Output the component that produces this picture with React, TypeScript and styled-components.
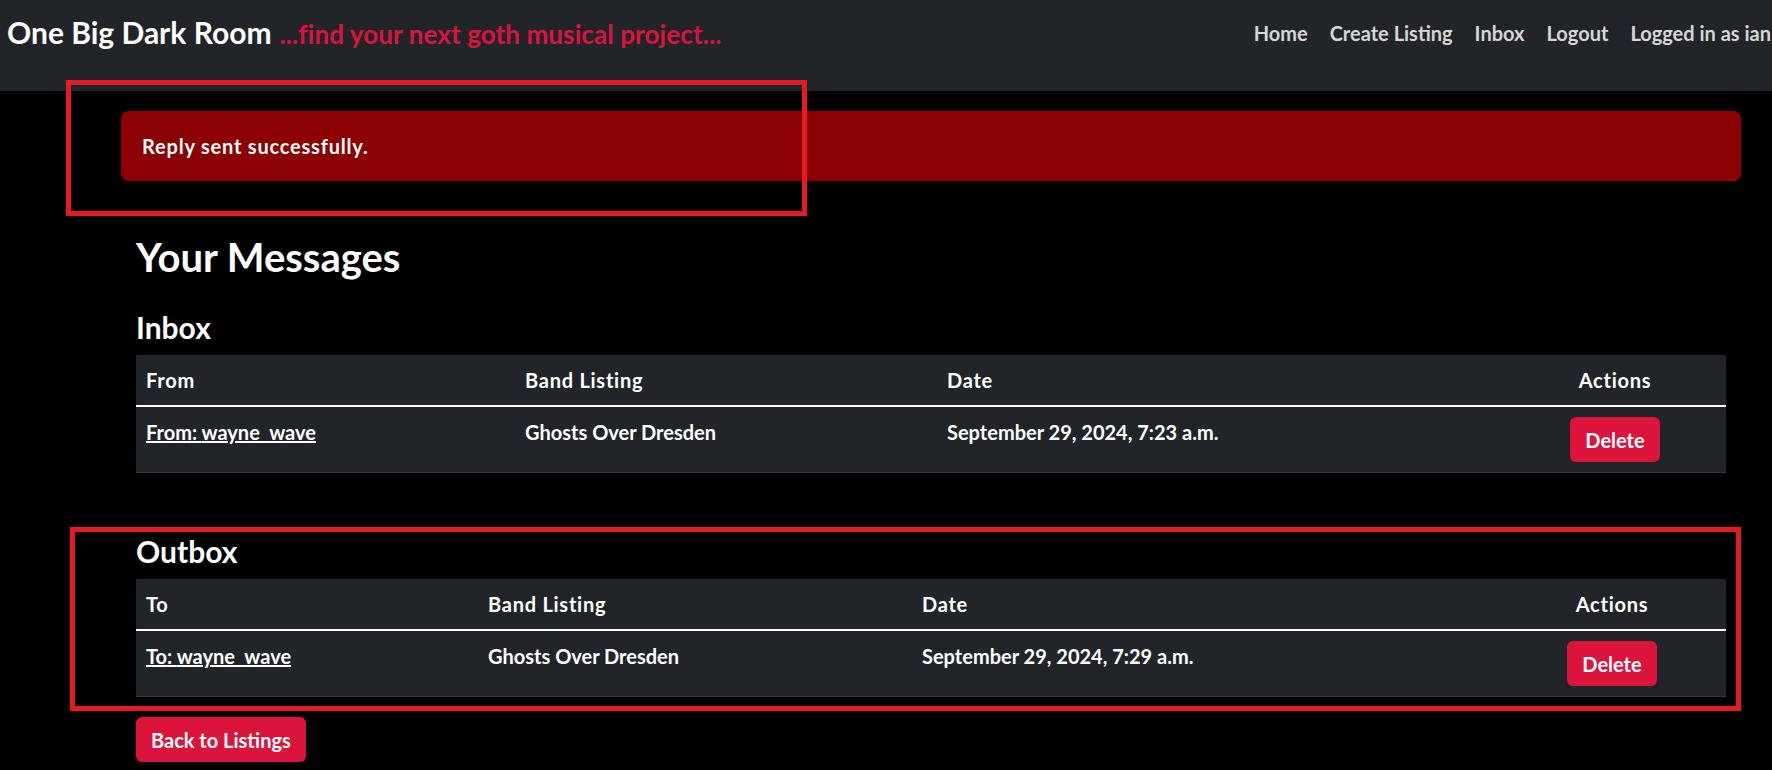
import React from "react";
import styled, { createGlobalStyle } from "styled-components";

const GlobalStyle = createGlobalStyle`
  * { box-sizing: border-box; }
  html, body {
    margin: 0;
    padding: 0;
    background: #000;
    overflow: hidden;
  }
  body {
    font-family: Lato, "Open Sans", "DejaVu Sans", sans-serif;
    color: #fff;
    font-size: 20px;
    line-height: 1.5;
  }
`;

const Page = styled.div`
  position: relative;
  min-height: 770px;
`;

const Navbar = styled.header`
  height: 91px;
  background: #212529;
  display: flex;
  align-items: center;
  padding: 0 0 25px 7px;
`;

const Brand = styled.div`
  display: flex;
  align-items: baseline;
  gap: 8px;
  white-space: nowrap;
`;

const BrandName = styled.span`
  font-size: 30px;
  line-height: 1.1;
  font-weight: 700;
  color: #fff;
`;

const Tagline = styled.span`
  font-size: 26px;
  line-height: 1.2;
  font-weight: 700;
  letter-spacing: 0.1px;
  color: #dc143c;
`;

const NavList = styled.nav`
  display: flex;
  margin-left: auto;
  margin-right: -10px;
  flex-shrink: 0;
`;

const NavLink = styled.a`
  padding: 0 11px;
  font-size: 20px;
  line-height: 30px;
  font-weight: 700;
  color: #d6d6d6;
  text-decoration: none;
  white-space: nowrap;
`;

const Main = styled.main`
  width: 1620px;
  margin-left: 121px;
  padding-top: 20px;
`;

const Alert = styled.div`
  background: #8b0000;
  border: 1px solid #8b0000;
  border-radius: 7px;
  padding: 19px 20px;
  font-size: 20px;
  font-weight: 700;
  letter-spacing: 0.8px;
  line-height: 30px;
`;

const Content = styled.div`
  padding: 0 15px;
`;

const Title = styled.h2`
  margin: 52px 0 0;
  font-size: 40px;
  line-height: 1.2;
  font-weight: 700;
`;

const Section = styled.section<{ $gap: number }>`
  margin-top: ${(p) => p.$gap}px;
`;

const SectionTitle = styled.h4`
  margin: 0 0 10px;
  font-size: 30px;
  line-height: 1.2;
  font-weight: 700;
`;

const Table = styled.table`
  width: 100%;
  table-layout: fixed;
  border-collapse: collapse;
  background: #212529;
  color: #fff;
`;

const Col = styled.col<{ $w: number }>`
  width: ${(p) => p.$w}px;
`;

const Th = styled.th<{ $center?: boolean }>`
  padding: 10px;
  text-align: ${(p) => (p.$center ? "center" : "left")};
  font-weight: 700;
  letter-spacing: 0.75px;
  line-height: 30px;
  vertical-align: top;
  border-bottom: 2px solid #fff;
`;

const Td = styled.td<{ $center?: boolean }>`
  padding: 10px;
  text-align: ${(p) => (p.$center ? "center" : "left")};
  font-weight: 700;
  line-height: 30px;
  vertical-align: top;
  border-bottom: 1px solid #373b3e;
`;

const UserLink = styled.a`
  color: #fff;
  text-decoration: underline;
  font-weight: 700;
`;

const Button = styled.button`
  display: inline-block;
  background: #dc143c;
  color: #fff;
  border: 0;
  border-radius: 6px;
  padding: 7.5px 15px;
  font-family: inherit;
  font-size: 20px;
  line-height: 30px;
  font-weight: 700;
  cursor: pointer;
`;

const Footer = styled.div`
  margin-top: 20px;
`;

const Annotation = styled.div<{ $x: number; $y: number; $w: number; $h: number }>`
  position: absolute;
  left: ${(p) => p.$x}px;
  top: ${(p) => p.$y}px;
  width: ${(p) => p.$w}px;
  height: ${(p) => p.$h}px;
  border: 5px solid #e31c23;
  pointer-events: none;
`;

type Msg = { who: string; band: string; date: string };

const MessageTable: React.FC<{
  label: string;
  prefix: string;
  cols: number[];
  msg: Msg;
}> = ({ label, prefix, cols, msg }) => (
  <Table>
    <colgroup>
      {cols.map((w, i) => (
        <Col key={i} $w={w} />
      ))}
    </colgroup>
    <thead>
      <tr>
        <Th>{label}</Th>
        <Th>Band Listing</Th>
        <Th>Date</Th>
        <Th $center>Actions</Th>
      </tr>
    </thead>
    <tbody>
      <tr>
        <Td>
          <UserLink href="#">
            {prefix}: {msg.who}
          </UserLink>
        </Td>
        <Td>{msg.band}</Td>
        <Td>{msg.date}</Td>
        <Td $center>
          <Button>Delete</Button>
        </Td>
      </tr>
    </tbody>
  </Table>
);

export default function App() {
  return (
    <Page>
      <GlobalStyle />
      <Navbar>
        <Brand>
          <BrandName>One Big Dark Room</BrandName>
          <Tagline>...find your next goth musical project...</Tagline>
        </Brand>
        <NavList>
          <NavLink href="#">Home</NavLink>
          <NavLink href="#">Create Listing</NavLink>
          <NavLink href="#">Inbox</NavLink>
          <NavLink href="#">Logout</NavLink>
          <NavLink href="#">Logged in as ian</NavLink>
        </NavList>
      </Navbar>
      <Main>
        <Alert>Reply sent successfully.</Alert>
        <Content>
          <Title>Your Messages</Title>
          <Section $gap={28}>
            <SectionTitle>Inbox</SectionTitle>
            <MessageTable
              label="From"
              prefix="From"
              cols={[379, 422, 567, 222]}
              msg={{
                who: "wayne_wave",
                band: "Ghosts Over Dresden",
                date: "September 29, 2024, 7:23 a.m.",
              }}
            />
          </Section>
          <Section $gap={60}>
            <SectionTitle>Outbox</SectionTitle>
            <MessageTable
              label="To"
              prefix="To"
              cols={[342, 434, 586, 228]}
              msg={{
                who: "wayne_wave",
                band: "Ghosts Over Dresden",
                date: "September 29, 2024, 7:29 a.m.",
              }}
            />
          </Section>
          <Footer>
            <Button>Back to Listings</Button>
          </Footer>
        </Content>
      </Main>
      <Annotation $x={66} $y={80} $w={741} $h={136} />
      <Annotation $x={70} $y={527} $w={1671} $h={184} />
    </Page>
  );
}
